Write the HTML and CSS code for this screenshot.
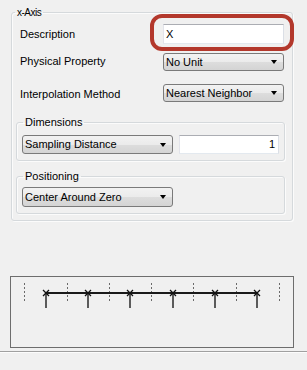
FILE: index.html
```html
<!DOCTYPE html>
<html>
<head>
<meta charset="utf-8">
<link rel="stylesheet" href="styles.css">
</head>
<body>
<div class="page">
  <fieldset class="axis">
    <legend class="axis-title">x-Axis</legend>
    <div class="rows">
      <div class="label r1">Description</div>
      <div class="textbox r1"><span>X</span></div>
      <div class="label r2">Physical Property</div>
      <div class="combo r2"><span>No Unit</span></div>
      <div class="label r3">Interpolation Method</div>
      <div class="combo r3"><span>Nearest Neighbor</span></div>
    </div>
    <fieldset class="group dims">
      <legend>Dimensions</legend>
      <div class="group-row">
        <div class="combo wide"><span>Sampling Distance</span></div>
        <div class="textbox num"><span>1</span></div>
      </div>
    </fieldset>
    <fieldset class="group pos">
      <legend>Positioning</legend>
      <div class="group-row">
        <div class="combo wide tall"><span>Center Around Zero</span></div>
      </div>
    </fieldset>
  </fieldset>

  <div class="preview">
    <svg width="282" height="70" viewBox="0 0 282 70">
      <g stroke="#6a6a6a" stroke-width="1" stroke-dasharray="2 2">
        <line x1="13.5" y1="6" x2="13.5" y2="26"/>
        <line x1="56.5" y1="6" x2="56.5" y2="26"/>
        <line x1="98.5" y1="6" x2="98.5" y2="26"/>
        <line x1="140.5" y1="6" x2="140.5" y2="26"/>
        <line x1="182.5" y1="6" x2="182.5" y2="26"/>
        <line x1="225.5" y1="6" x2="225.5" y2="26"/>
        <line x1="268.5" y1="6" x2="268.5" y2="26"/>
      </g>
      <line x1="35" y1="16" x2="246" y2="16" stroke="#1a1a1a" stroke-width="2.2"/>
      <g stroke="#2a2a2a" stroke-width="1.5">
        <line x1="35" y1="16" x2="35" y2="31"/>
        <line x1="77" y1="16" x2="77" y2="31"/>
        <line x1="119" y1="16" x2="119" y2="31"/>
        <line x1="162" y1="16" x2="162" y2="31"/>
        <line x1="204" y1="16" x2="204" y2="31"/>
        <line x1="246" y1="16" x2="246" y2="31"/>
      </g>
      <g stroke="#111" stroke-width="1.3">
        <path d="M32 13 L38 19 M38 13 L32 19"/>
        <path d="M74 13 L80 19 M80 13 L74 19"/>
        <path d="M116 13 L122 19 M122 13 L116 19"/>
        <path d="M159 13 L165 19 M165 13 L159 19"/>
        <path d="M201 13 L207 19 M207 13 L201 19"/>
        <path d="M243 13 L249 19 M249 13 L243 19"/>
      </g>
    </svg>
  </div>
  <div class="separator"></div>

  <div class="annotation"></div>
</div>
</body>
</html>
```

FILE: styles.css
```css
html, body {
  margin: 0;
  padding: 0;
  background: #f0f0f0;
}

body {
  font-family: "Liberation Sans", Arial, sans-serif;
  font-size: 11px;
  color: #000;
  width: 307px;
  height: 370px;
  overflow: hidden;
}

.page {
  position: relative;
  padding-top: 6px;
  height: 364px;
}

fieldset {
  margin: 0;
  padding: 0;
  min-width: 0;
  border: 1px solid #d5d9dc;
  border-radius: 3px;
  box-shadow: inset 1px 1px 0 #fbfbfb, 1px 1px 0 #fbfbfb;
}

legend {
  padding: 0 2px;
  line-height: 13px;
  height: 13px;
  font-size: 11px;
}

.axis {
  margin-left: 11px;
  width: 282px;
  box-sizing: border-box;
  padding-bottom: 6px;
}

.axis-title {
  margin-left: 3px;
  font-size: 10px;
  letter-spacing: -0.5px;
}

.rows {
  display: grid;
  grid-template-columns: 143px 121px;
  margin-left: 8px;
  margin-top: 5px;
  align-items: center;
}

.r1 { grid-row: 1; }
.r2 { grid-row: 2; margin-top: 9px; }
.r3 { grid-row: 3; margin-top: 13px; }

.label {
  line-height: 13px;
}
.label.r3 { position: relative; top: 1px; }
.label.r2 { position: relative; top: -1px; }

.textbox {
  box-sizing: border-box;
  height: 20px;
  background: #fff;
  border: 1px solid;
  border-color: #abadb3 #dbdfe6 #e3e9ef #e2e3ea;
  display: flex;
  align-items: center;
  padding: 0 3px 0 2px;
  line-height: 13px;
}

.combo {
  box-sizing: border-box;
  position: relative;
  height: 18px;
  border: 1px solid #7a7a7a;
  border-radius: 3px;
  background: linear-gradient(#f2f2f2 0%, #ebebeb 50%, #dddddd 51%, #d4d4d4 100%);
  display: flex;
  align-items: center;
  padding-left: 2px;
  line-height: 13px;
}

.combo::after {
  content: "";
  position: absolute;
  right: 6px;
  top: 50%;
  margin-top: -2px;
  border-left: 3.5px solid transparent;
  border-right: 3.5px solid transparent;
  border-top: 4px solid #000;
}

.group {
  margin-left: 4px;
  width: 269px;
  box-sizing: border-box;
  padding: 0 0 6px 5px;
}

.group legend {
  margin-left: 1px;
}

.dims {
  margin-top: 14px;
}

.pos {
  margin-top: 9px;
}

.group-row {
  display: flex;
  gap: 6px;
  margin-top: 6px;
}

.pos .group-row {
  margin-top: 4px;
}

.combo.wide {
  width: 151px;
  height: 19px;
}

.combo.tall {
  height: 20px;
}

.textbox.num {
  width: 100px;
  height: 19px;
  justify-content: flex-end;
}

.preview {
  margin: 55px 0 0 10px;
  width: 284px;
  height: 72px;
  box-sizing: border-box;
  border: 1px solid #6d6d6d;
}

.preview svg {
  display: block;
}

.separator {
  margin-top: 3px;
  height: 1px;
  background: #a0a0a0;
  border-bottom: 1px solid #fcfcfc;
}

.annotation {
  position: absolute;
  left: 150px;
  top: 14px;
  width: 144px;
  height: 37px;
  box-sizing: border-box;
  border: 4px solid #b3382c;
  border-radius: 12px;
}
```
